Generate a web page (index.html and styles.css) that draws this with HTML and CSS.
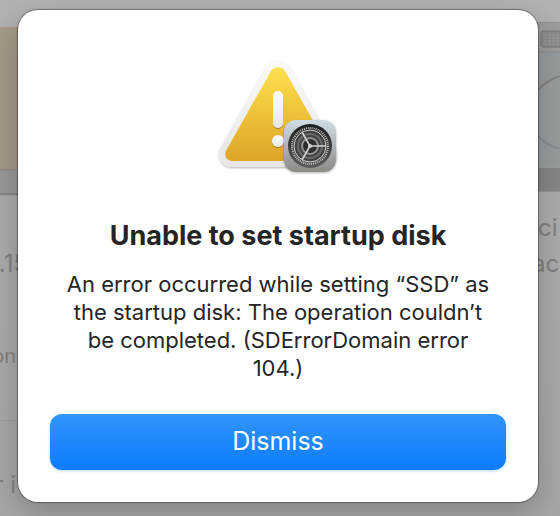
FILE: index.html
```html
<!DOCTYPE html>
<html lang="en">
<head>
    <meta charset="UTF-8">
    <meta name="viewport" content="width=device-width, initial-scale=1.0">
    <title>Startup Disk</title>
    <link rel="stylesheet" href="styles.css">
</head>
<body>
    <main class="page">
        <section class="column column-left">
            <div class="picture picture-tan"></div>
            <p class="model">.15</p>
            <p class="detail">on</p>
            <p class="footer-text">r i</p>
        </section>
        <section class="column column-right">
            <svg class="picture picture-disk" viewBox="0 0 28 170" aria-hidden="true">
                <rect width="28" height="170" fill="#9b9d9d"/>
                <path d="M0 0h28M0 30h28" stroke="#878989"/>
                <rect x="9" y="9" width="30" height="16" rx="2" fill="#8b8c8c" stroke="#777"/>
                <path d="M12 13h16M12 16h16M12 19h16M12 22h16" stroke="#9e9e9e" stroke-dasharray="3 1"/>
                <rect y="31" width="28" height="113" fill="#969b9d"/>
                <path d="M6 68Q15 58 28 54" fill="none" stroke="#818281" stroke-width="2"/>
                <path d="M6 114Q15 124 28 127" fill="none" stroke="#858e95" stroke-width="2"/>
                <rect y="146" width="28" height="23" fill="#868686"/>
                <path d="M0 169h28" stroke="#8b8b8b"/>
            </svg>
            <p class="name">ci</p>
            <p class="model">acO</p>
        </section>
    </main>

    <div class="overlay">
        <div class="dialog" role="alertdialog" aria-labelledby="title" aria-describedby="message">
            <svg class="alert-icon" viewBox="0 0 128 128" aria-hidden="true">
                <defs>
                    <linearGradient id="border" x1="0" y1="0" x2="0" y2="1">
                        <stop offset="0" stop-color="#fafafa"/>
                        <stop offset="1" stop-color="#e6e6e6"/>
                    </linearGradient>
                    <linearGradient id="yellow" x1="0" y1="0" x2="0" y2="1">
                        <stop offset="0" stop-color="#fee04e"/>
                        <stop offset="1" stop-color="#dda426"/>
                    </linearGradient>
                    <linearGradient id="mark" x1="0" y1="0" x2="0" y2="1">
                        <stop offset="0" stop-color="#ffffff"/>
                        <stop offset="1" stop-color="#e6e6e4"/>
                    </linearGradient>
                    <linearGradient id="tile" x1="0" y1="0" x2="0" y2="1">
                        <stop offset="0" stop-color="#cfdde4"/>
                        <stop offset="1" stop-color="#8d8a87"/>
                    </linearGradient>
                    <linearGradient id="dial" x1="0" y1="0" x2="0" y2="1">
                        <stop offset="0" stop-color="#1c1d1d"/>
                        <stop offset="1" stop-color="#5c5c5c"/>
                    </linearGradient>
                    <filter id="shadow" x="-20%" y="-20%" width="140%" height="140%">
                        <feDropShadow dx="0" dy="1" stdDeviation="1" flood-opacity="0.3"/>
                    </filter>
                    <filter id="mark-shadow" x="-30%" y="-20%" width="160%" height="150%">
                        <feDropShadow dx="0" dy="1" stdDeviation="0.6" flood-color="#75591b" flood-opacity="0.6"/>
                    </filter>
                </defs>
                <!-- warning triangle -->
                <path d="M52 8C57-1 71-1 76 8L121 87C127 97 120 107 109 107H19C8 107 1 97 7 87Z" fill="url(#border)" filter="url(#shadow)"/>
                <path d="M57 11C60 6 68 6 71 11L115 89C119 96 115 101 108 101H20C12 101 9 95 13 89Z" fill="url(#yellow)"/>
                <g fill="url(#mark)" filter="url(#mark-shadow)">
                    <rect x="59" y="31" width="10" height="37" rx="5"/>
                    <circle cx="64" cy="81" r="6"/>
                </g>
                <!-- settings badge -->
                <rect x="70" y="60" width="52" height="52" rx="12" fill="url(#tile)" filter="url(#shadow)"/>
                <circle cx="96" cy="86" r="22" fill="url(#dial)"/>
                <circle cx="96" cy="86" r="18" fill="none" stroke="#bfc0c0" stroke-width="2" stroke-dasharray="1 1"/>
                <circle cx="96" cy="86" r="16" fill="#424343" stroke="#d0d0d0"/>
                <circle cx="96" cy="86" r="12" fill="none" stroke="#686969" stroke-width="2"/>
                <circle cx="96" cy="86" r="8" fill="#2d2e2e" stroke="#929393" stroke-width="2"/>
                <path d="M96 86h16M96 86l-8-14M96 86l-8 14" stroke="#d2d2d2" stroke-width="1.6"/>
                <circle cx="96" cy="86" r="2" fill="#d2d2d2"/>
            </svg>
            <h1 class="title" id="title">Unable to set startup disk</h1>
            <p class="message" id="message">An error occurred while setting “SSD” as the startup disk: The operation couldn’t be completed. (SDErrorDomain error 104.)</p>
            <button class="dismiss" type="button">Dismiss</button>
        </div>
    </div>
</body>
</html>
```

FILE: styles.css
```css
* {
    box-sizing: border-box;
}

body {
    margin: 0;
    min-height: 100vh;
    font-family: Inter, "Liberation Sans", sans-serif;
    background: #a3a3a3;
    color: #252525;
    overflow: hidden;
}

p {
    margin: 0;
}

/* Dimmed window behind the dialog */
.page {
    display: flex;
    justify-content: space-between;
    min-height: 100vh;
    color: #808080;
    background: linear-gradient(#b2b2b2, #aaaaaa 50%, #a6a6a6);
}

.column {
    display: flex;
    flex-direction: column;
    width: 28px;
    white-space: nowrap;
}

.column-left {
    padding-top: 27px;
}

.column-right {
    padding-top: 22px;
}

/* Text on the left runs off the window edge */
.column-left p {
    display: flex;
    justify-content: flex-end;
    padding-right: 12px;
    white-space: pre;
}

.picture {
    flex-shrink: 0;
}

.picture-tan {
    height: 169px;
    background: linear-gradient(#a3998a 142px, #8d8d8d 142px, #8d8d8d 144px, #989898 144px, #989898 166px, #868686 166px, #868686 168px, #a2a2a2 168px);
}

.picture-disk {
    width: 28px;
    height: 170px;
}

.name {
    margin-top: 20px;
    padding-left: 6px;
    font-size: 24px;
    line-height: 32px;
}

.model {
    font-size: 24px;
    line-height: 40px;
}

.column-left .model {
    margin-top: 48px;
    padding-right: 0;
}

.detail {
    margin-top: 56px;
    font-size: 20px;
    line-height: 32px;
}

.footer-text {
    margin-top: 48px;
    padding-top: 48px;
    border-top: 1px solid #999999;
    font-size: 24px;
    line-height: 32px;
}

/* Dialog */
.overlay {
    position: absolute;
    inset: 0;
    padding: 10px 22px 14px 18px;
}

.dialog {
    display: flex;
    flex-direction: column;
    align-items: center;
    padding: 50px 32px 32px;
    border-radius: 20px;
    background: #ffffff;
    box-shadow: 0 0 1px 1px rgba(0, 0, 0, 0.35), 0 10px 30px rgba(0, 0, 0, 0.22);
    text-align: center;
}

.alert-icon {
    width: 128px;
    height: 128px;
}

.title {
    margin: 32px 0 0;
    font-size: 27px;
    line-height: 32px;
    font-weight: 700;
}

.message {
    margin-top: 18px;
    padding: 0 12px;
    font-size: 22px;
    line-height: 28px;
}

.dismiss {
    width: 100%;
    height: 56px;
    margin-top: 32px;
    padding: 0 0 2px;
    border: none;
    border-radius: 12px;
    background: linear-gradient(#3095fc, #0d7cfc);
    box-shadow: 0 1px 3px rgba(13, 124, 252, 0.3);
    color: #ffffff;
    font-family: inherit;
    font-size: 25px;
}
```
